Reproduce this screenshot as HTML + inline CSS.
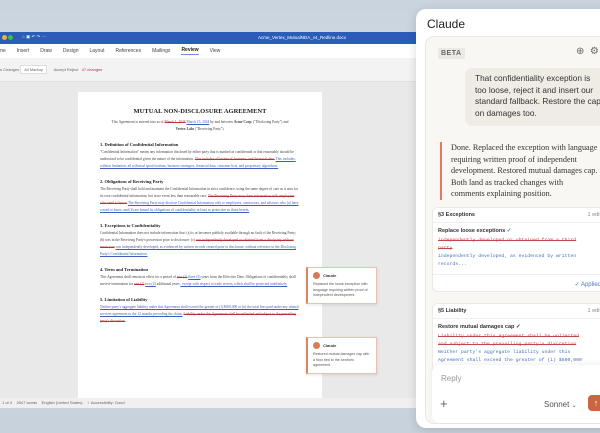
<!DOCTYPE html>
<html><head><meta charset="utf-8"><style>
*{box-sizing:border-box;margin:0;padding:0}
body{width:600px;height:433px;overflow:hidden;position:relative;font-family:"Liberation Sans",sans-serif;background:linear-gradient(180deg,#c9d4de 0%,#d5dde4 40%,#c8d2dc 100%)}
.win{position:absolute;left:0;top:32px;width:420px;height:376px;background:#e9e9e9;overflow:hidden}
.tb{height:12px;background:#2b5cb8;position:relative;color:#fff;font-size:4.5px}
.ribbon{height:14px;background:#fff;font-size:5px;color:#444;display:flex;gap:11px;align-items:center;padding-left:0}
.tools{height:24px;background:#f3f3f3;font-size:4px;color:#666;padding:9px 0 0 0;border-bottom:1px solid #e2e2e2}
.page{position:absolute;left:78px;top:60px;width:244px;height:320px;background:#fff;padding:16px 22px;font-family:"Liberation Serif",serif;font-size:3.6px;line-height:7px;color:#444}
.page h1{font-size:6.5px;text-align:center;color:#222;margin-bottom:4px}
.page h2{font-size:4.5px;color:#222;margin:8px 0 1px}
.del{color:#b4323a;text-decoration:line-through}
.ins{color:#3d5fb8;text-decoration:underline}
.status{position:absolute;left:0;bottom:0;width:420px;height:10px;background:#f0f0f0;font-size:4px;color:#666;padding:2px 2px}
.cm{position:absolute;left:306px;width:71px;background:#fff;border:1px solid #e6c2b2;border-left:2px solid #d98762;box-shadow:0 1px 3px rgba(0,0,0,.1);font-size:3.6px;color:#555;padding:4px 5px;line-height:5.6px}
.cm b{display:flex;align-items:center;gap:3px;font-size:4px;color:#333;margin-bottom:3px}
.cm i{display:inline-block;width:7px;height:7px;border-radius:50%;background:#d97a57}
.panel{position:absolute;left:416px;top:9px;width:200px;height:419px;background:#fff;border-radius:10px;box-shadow:0 2px 10px rgba(0,0,0,.15)}
.ptitle{position:absolute;left:11px;top:8px;font-size:12px;color:#222}
.inner{position:absolute;left:9px;top:27px;width:200px;height:388px;background:#f8f7f4;border:1px solid #e8e6e0;border-radius:9px}
.beta{position:absolute;left:12px;top:11px;background:#ebe9e4;color:#666;font-size:7px;padding:2px 3px;letter-spacing:.5px;font-weight:bold}
.bubble{position:absolute;left:39px;top:31px;width:160px;height:58px;background:#efece6;border-radius:7px;font-size:8.3px;line-height:11.5px;color:#333;padding:5px 10px;white-space:nowrap}
.asst{position:absolute;left:14px;top:105px;width:190px;border-left:2px solid #e07a5a;padding-left:9px;font-family:"Liberation Serif",serif;font-size:8.2px;line-height:11.6px;color:#333;white-space:nowrap}
.card{position:absolute;left:6px;width:190px;background:#fff;border:1px solid #ece9e3;border-radius:6px;font-size:5.5px;color:#333}
.card .h{height:15px;border-bottom:1px solid #eee;padding:4px 5px;font-weight:bold;position:relative}
.card .h span{position:absolute;right:20px;font-weight:normal;color:#888}
.card .t{padding:5px 5px 3px;font-weight:bold}
.mono{font-family:"Liberation Mono",monospace;font-size:4.8px;line-height:8px;padding:0 5px;white-space:nowrap;overflow:hidden}
.reply{position:absolute;left:6px;top:328px;width:190px;height:58px;background:#fff;border-radius:8px;box-shadow:0 -2px 6px rgba(0,0,0,.05);font-size:8px;color:#999}
</style></head><body>
<div class="win">
<div class="tb"><span style="position:absolute;left:2px;top:3px"><span style="display:inline-block;width:5px;height:5px;border-radius:50%;background:#e8b13a"></span> <span style="display:inline-block;width:5px;height:5px;border-radius:50%;background:#3dbb4d"></span></span><span style="position:absolute;left:22px;top:2px;color:#cfe">⌂ ▣ ↶ ↷ ⋯</span><span style="position:absolute;left:258px;top:3px">Acme_Vertex_MutualNDA_v4_Redline.docx</span></div>
<div class="ribbon"><span style="margin-left:-4px">ome</span><span>Insert</span><span>Draw</span><span>Design</span><span>Layout</span><span>References</span><span>Mailings</span><span style="font-weight:bold;color:#222;border-bottom:1px solid #6b8fd8;padding-bottom:1px">Review</span><span>View</span></div>
<div class="tools">s Changes <span style="border:1px solid #ddd;background:#fff;padding:1px 3px">All Markup</span> &nbsp;&nbsp;&nbsp;&nbsp; Accept Reject &nbsp; <span style="color:#b4323a">47 changes</span></div>
<div class="page">
<h1>MUTUAL NON-DISCLOSURE AGREEMENT</h1>
<div style="text-align:center;padding:0 10px">This Agreement is entered into as of <span class="del">March 1, 2026</span> <span class="ins">March 15, 2024</span> by and between <b>Acme Corp.</b> ("Disclosing Party") and <b>Vertex Labs</b> ("Receiving Party").</div>
<h2>1. Definition of Confidential Information</h2>
<div>"Confidential Information" means any information disclosed by either party that is marked as confidential or that reasonably should be understood to be confidential given the nature of the information. <span class="del">This includes all technical, business, and financial data.</span> <span class="ins">This includes, without limitation, all technical specifications, business strategies, financial data, customer lists, and proprietary algorithms.</span></div>
<h2>2. Obligations of Receiving Party</h2>
<div>The Receiving Party shall hold and maintain the Confidential Information in strict confidence, using the same degree of care as it uses for its own confidential information, but in no event less than reasonable care. <span class="del">The Receiving Party may share information with employees who need to know.</span> <span class="ins">The Receiving Party may disclose Confidential Information only to employees, contractors, and advisors who (a) have a need to know, and (b) are bound by obligations of confidentiality at least as protective as those herein.</span></div>
<h2>3. Exceptions to Confidentiality</h2>
<div>Confidential Information does not include information that: (a) is or becomes publicly available through no fault of the Receiving Party; (b) was in the Receiving Party's possession prior to disclosure; (c) <span class="del">was independently developed or obtained from a third party without restriction</span> <span class="ins">was independently developed, as evidenced by written records created prior to disclosure, without reference to the Disclosing Party's Confidential Information.</span></div>
<h2>4. Term and Termination</h2>
<div>This Agreement shall remain in effect for a period of <span class="del">two (2)</span> <span class="ins">three (3)</span> years from the Effective Date. Obligations of confidentiality shall survive termination for <span class="del">one (1)</span> <span class="ins">two (2)</span> additional years <span class="ins">, except with respect to trade secrets, which shall be protected indefinitely.</span></div>
<h2>5. Limitation of Liability</h2>
<div><span class="ins">Neither party's aggregate liability under this Agreement shall exceed the greater of (i) $500,000 or (ii) the total fees paid under any related services agreement in the 12 months preceding the claim.</span> <span class="del">Liability under this Agreement shall be unlimited and subject to the prevailing party's discretion.</span></div>
</div>
<div class="status">1 of 4 &nbsp;&nbsp; 2847 words &nbsp;&nbsp; English (United States) &nbsp;&nbsp; ♀ Accessibility: Good</div>
</div>
<div class="cm" style="top:267px"><b><i></i>Claude</b>Replaced the loose exception with language requiring written proof of independent development.</div>
<div class="cm" style="top:337px"><b><i></i>Claude</b>Restored mutual damages cap with a floor tied to the services agreement.</div>
<div class="panel">
<div class="ptitle">Claude</div>
<div class="inner">
<div class="beta">BETA</div>
<div style="position:absolute;left:150px;top:9px;font-size:10px;color:#666">⊕ &nbsp;⚙</div>
<div class="bubble">That confidentiality exception is<br>too loose, reject it and insert our<br>standard fallback. Restore the cap<br>on damages too.</div>
<div class="asst">Done. Replaced the exception with language<br>requiring written proof of independent<br>development. Restored mutual damages cap.<br>Both land as tracked changes with<br>comments explaining position.</div>
<div class="card" style="top:170px;height:85px"><div class="h">§3 Exceptions<span>1 edit</span></div><div class="t">Replace loose exceptions <span style="color:#4a74c9">✓</span></div><div class="mono del" style="color:#c0474a">independently developed or obtained from a third<br>party</div><div class="mono" style="color:#4a6fb8">independently developed, as evidenced by written<br>records...</div><div style="border-top:1px solid #eee;margin-top:5px;padding:6px 20px 0 0;text-align:right;color:#4a74c9;font-size:6px">✓ Applied</div></div>
<div class="card" style="top:266px;height:70px"><div class="h">§5 Liability<span>1 edit</span></div><div class="t">Restore mutual damages cap ✓</div><div class="mono del" style="color:#c0474a">Liability under this Agreement shall be unlimited<br>and subject to the prevailing party's discretion</div><div class="mono" style="color:#4a6fb8">Neither party's aggregate liability under this<br>Agreement shall exceed the greater of (i) $500,000</div></div>
<div class="reply"><div style="position:absolute;left:9px;top:9px">Reply</div><div style="position:absolute;left:8px;top:31px;font-size:13px;color:#666">+</div><div style="position:absolute;left:112px;top:35px;color:#555">Sonnet <span style="font-size:6px">⌄</span></div><div style="position:absolute;left:156px;top:30px;width:16px;height:16px;border-radius:4px;background:#c9653f;color:#fff;text-align:center;line-height:16px;font-size:9px">↑</div></div>
</div></div>
</body></html>
